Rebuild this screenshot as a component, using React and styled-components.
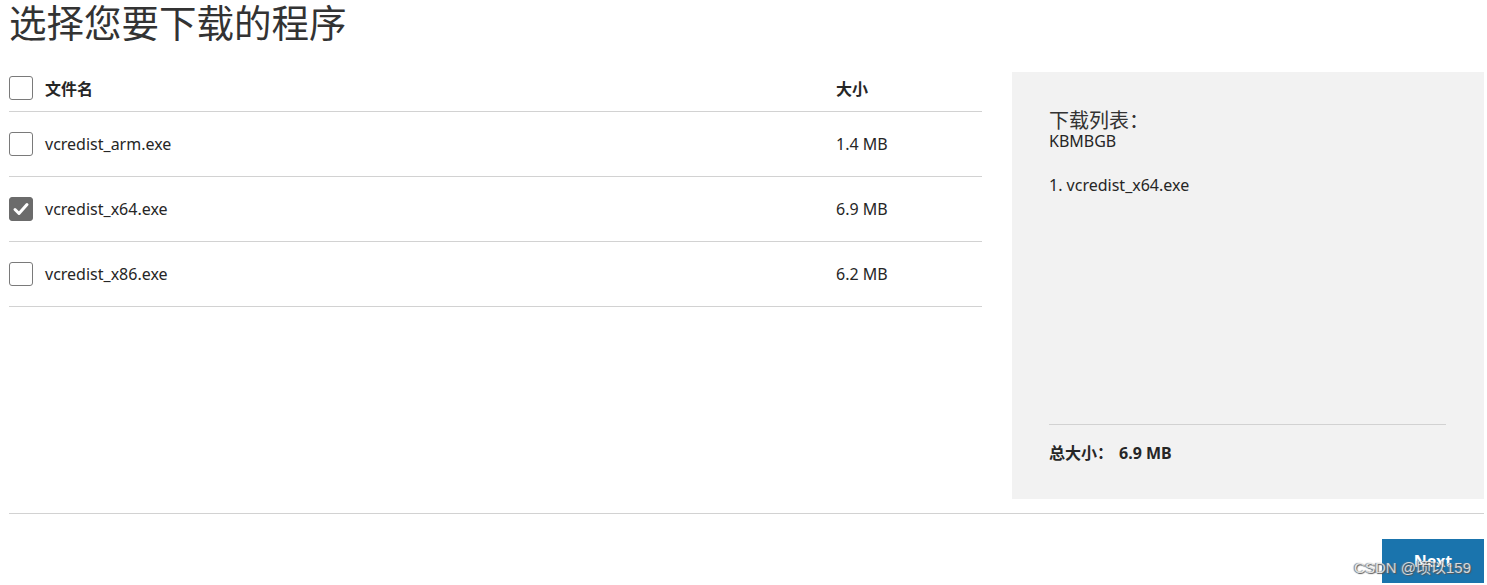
import React, { useState } from "react";
import styled, { createGlobalStyle } from "styled-components";

const GlobalStyle = createGlobalStyle`
  html, body {
    margin: 0;
    padding: 0;
    background: #fff;
  }
  body {
    font-family: "Noto Sans", "Noto Sans CJK SC", sans-serif;
    color: #262626;
  }
`;

// === 스타일 ===
const Page = styled.div`
  position: relative;
  width: 1475px;
  padding: 0 3px 0 9px;
  height: 585px;
  overflow: hidden;
`;

const Title = styled.h1`
  margin: 0;
  font-family: "Noto Sans CJK SC", sans-serif;
  font-size: 37.5px;
  font-weight: 400;
  line-height: 41px;
  color: #333;
`;

const Content = styled.div`
  display: flex;
  gap: 30px;
  margin-top: 31px;
`;

const Table = styled.div`
  width: 973px;
  display: flex;
  flex-direction: column;
`;

const Row = styled.div`
  display: grid;
  grid-template-columns: 827px 1fr;
  align-items: ${(p) => (p.$header ? "start" : "center")};
  box-sizing: border-box;
  height: ${(p) => (p.$header ? "40px" : "65px")};
  padding-top: ${(p) => (p.$header ? "4px" : "0")};
  border-bottom: 1px solid #d2d2d2;
  font-size: 16px;
  line-height: 24px;
  font-weight: ${(p) => (p.$header ? 700 : 400)};
  font-family: ${(p) =>
    p.$header ? '"Noto Sans CJK SC", sans-serif' : '"Noto Sans", "Noto Sans CJK SC", sans-serif'};
`;

const NameCell = styled.label`
  display: flex;
  align-items: center;
  gap: 12px;
  cursor: pointer;
`;

const Box = styled.span`
  width: 24px;
  height: 24px;
  box-sizing: border-box;
  border-radius: 3px;
  border: 1px solid ${(p) => (p.$checked ? "#6b6b6b" : "#7a7a7a")};
  background: ${(p) => (p.$checked ? "#6b6b6b" : "#fff")};
  display: flex;
  align-items: center;
  justify-content: center;
  flex-shrink: 0;
`;

const SizeCell = styled.div``;

const Panel = styled.div`
  width: 472px;
  height: 427px;
  box-sizing: border-box;
  background: #f2f2f2;
  padding: 36px 38px 35px 37px;
  display: flex;
  flex-direction: column;
`;

const PanelTitle = styled.div`
  font-family: "Noto Sans CJK SC", sans-serif;
  font-size: 20px;
  line-height: 24px;
  color: #333;
`;

const PanelSub = styled.div`
  font-size: 16px;
  line-height: 18px;
  color: #262626;
`;

const FileList = styled.ol`
  flex: 1;
  margin: 24px 0 0;
  padding: 0;
  list-style: none;
  font-size: 16px;
  line-height: 22px;
  color: #262626;
`;

const Total = styled.div`
  display: flex;
  gap: 6px;
  border-top: 1px solid #d2d2d2;
  padding-top: 17px;
  font-family: "Noto Sans", "Noto Sans CJK SC", sans-serif;
  font-size: 16px;
  font-weight: 700;
  line-height: 22px;
  color: #262626;
`;

const Divider = styled.hr`
  margin: 14px 0 0;
  border: none;
  border-top: 1px solid #d2d2d2;
`;

const Footer = styled.div`
  display: flex;
  justify-content: flex-end;
  margin-top: 25px;
`;

const NextButton = styled.button`
  width: 102px;
  height: 44px;
  border: none;
  background: #1a74ad;
  color: #fff;
  font-family: "Noto Sans", sans-serif;
  font-size: 16px;
  font-weight: 700;
  cursor: pointer;
`;

const Watermark = styled.div`
  position: absolute;
  right: 16px;
  bottom: 8px;
  font-family: "Liberation Sans", "Noto Sans CJK SC", sans-serif;
  font-size: 15px;
  color: rgba(255, 255, 255, 0.75);
  text-shadow: 1px 1px 1px #555, -1px 0 1px #777;
  pointer-events: none;
`;

const files = [
  { name: "vcredist_arm.exe", size: "1.4 MB" },
  { name: "vcredist_x64.exe", size: "6.9 MB" },
  { name: "vcredist_x86.exe", size: "6.2 MB" },
];

const Check = () => (
  <svg width="18" height="18" viewBox="0 0 18 18">
    <path
      d="M3 9.5 L7 13.5 L15 4.5"
      fill="none"
      stroke="#fff"
      strokeWidth="3"
      strokeLinecap="round"
      strokeLinejoin="round"
    />
  </svg>
);

// === 컴포넌트 ===
const App = () => {
  const [selected, setSelected] = useState(["vcredist_x64.exe"]);

  const toggle = (name) => {
    setSelected((prev) =>
      prev.includes(name) ? prev.filter((n) => n !== name) : [...prev, name]
    );
  };

  const allChecked = selected.length === files.length;

  return (
    <>
      <GlobalStyle />
      <Page>
        <Title>选择您要下载的程序</Title>
        <Content>
          <Table>
            <Row $header>
              <NameCell
                onClick={() =>
                  setSelected(allChecked ? [] : files.map((f) => f.name))
                }
              >
                <Box $checked={allChecked}>{allChecked && <Check />}</Box>
                文件名
              </NameCell>
              <SizeCell>大小</SizeCell>
            </Row>
            {files.map((f) => {
              const checked = selected.includes(f.name);
              return (
                <Row key={f.name}>
                  <NameCell onClick={() => toggle(f.name)}>
                    <Box $checked={checked}>{checked && <Check />}</Box>
                    {f.name}
                  </NameCell>
                  <SizeCell>{f.size}</SizeCell>
                </Row>
              );
            })}
          </Table>
          <Panel>
            <PanelTitle>下载列表：</PanelTitle>
            <PanelSub>KBMBGB</PanelSub>
            <FileList>
              {files
                .filter((f) => selected.includes(f.name))
                .map((f, i) => (
                  <li key={f.name}>
                    {i + 1}. {f.name}
                  </li>
                ))}
            </FileList>
            <Total>
              <span>总大小：</span>
              <span>6.9 MB</span>
            </Total>
          </Panel>
        </Content>
        <Divider />
        <Footer>
          <NextButton>Next</NextButton>
        </Footer>
        <Watermark>CSDN @顷以159</Watermark>
      </Page>
    </>
  );
};

export default App;
